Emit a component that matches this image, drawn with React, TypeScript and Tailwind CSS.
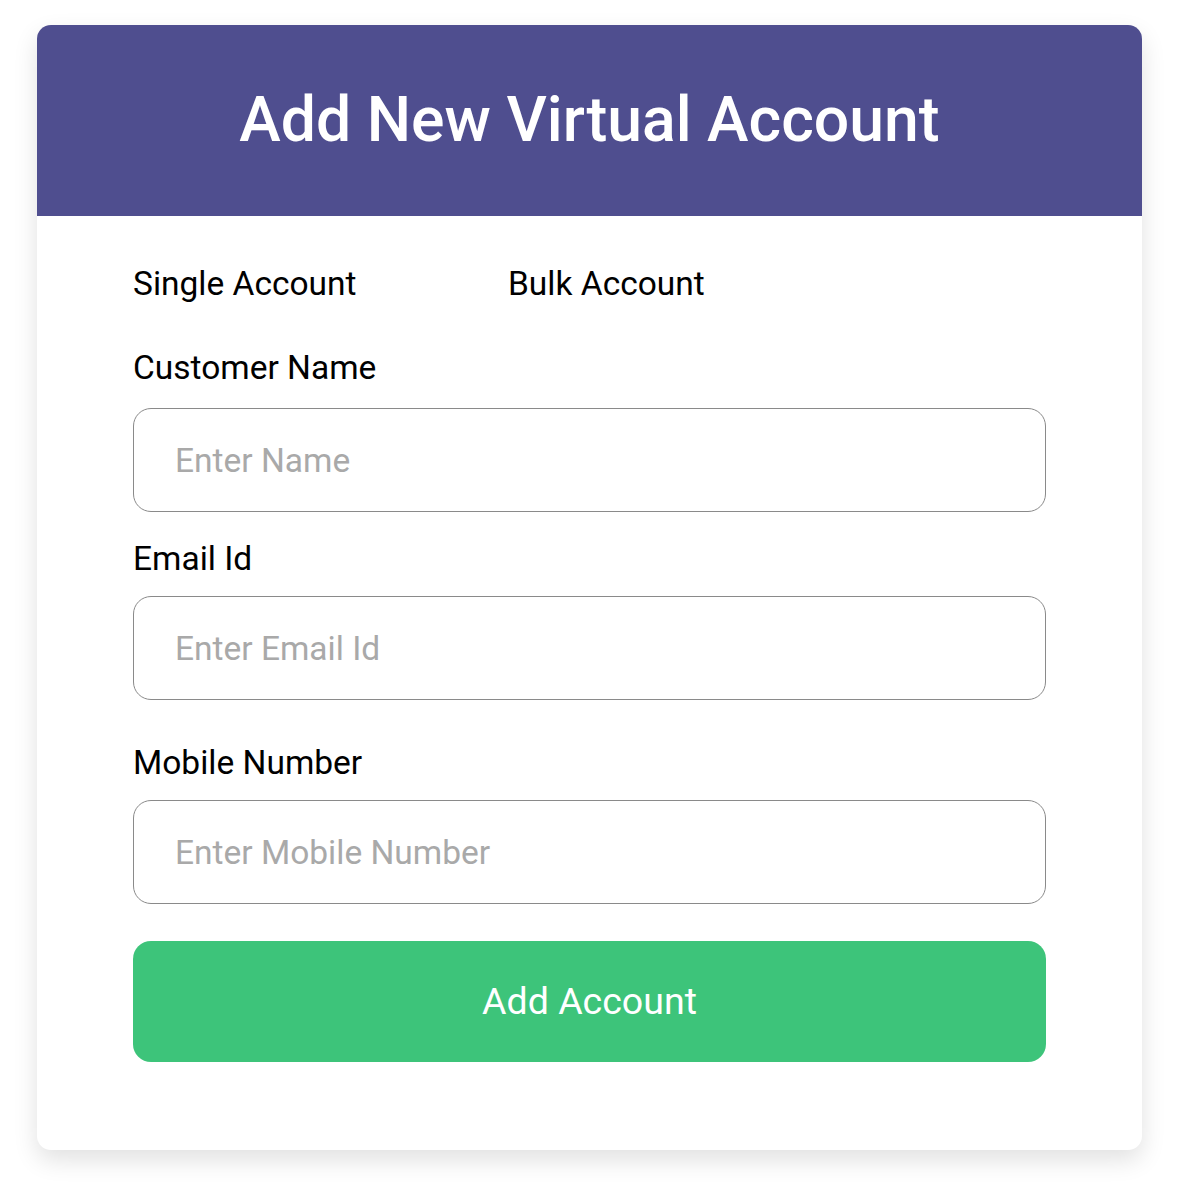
import React from 'react';

const fields = [
  { label: 'Customer Name', placeholder: 'Enter Name', labelClass: 'mt-[44px]', inputClass: 'mt-[20px]' },
  { label: 'Email Id', placeholder: 'Enter Email Id', labelClass: 'mt-[27px]', inputClass: 'mt-[17px]' },
  { label: 'Mobile Number', placeholder: 'Enter Mobile Number', labelClass: 'mt-[43px]', inputClass: 'mt-[17px]' },
];

const App: React.FC = () => {
  return (
    <div className="min-h-[1200px] bg-white pt-[25px] font-['Roboto',sans-serif]">
      <div className="mx-[37px] h-[1125px] overflow-hidden rounded-[14px] bg-white shadow-[0_10px_24px_rgba(0,0,0,0.12)]">
        <div className="flex h-[191px] items-center justify-center bg-[#4f4e8f]">
          <h1 className="text-[62.5px] font-medium leading-none text-white">Add New Virtual Account</h1>
        </div>
        <div className="px-[96px] pt-[48px]">
          <div className="flex text-[33.5px] leading-[40px] text-black">
            <span className="w-[375px] shrink-0">Single Account</span>
            <span>Bulk Account</span>
          </div>
          {fields.map((f) => (
            <div key={f.label}>
              <label className={`block text-[33.5px] leading-[40px] text-black ${f.labelClass}`}>{f.label}</label>
              <input
                type="text"
                placeholder={f.placeholder}
                className={`block h-[104px] w-full rounded-[18px] border border-[#8a8a8a] px-[41px] text-[33.5px] text-black outline-none placeholder:text-[#a9a9a9] ${f.inputClass}`}
              />
            </div>
          ))}
          <button className="mt-[37px] flex h-[121px] w-full items-center justify-center rounded-[18px] bg-[#3dc47a] text-[37.5px] text-white">
            Add Account
          </button>
        </div>
      </div>
    </div>
  );
};

export default App;
